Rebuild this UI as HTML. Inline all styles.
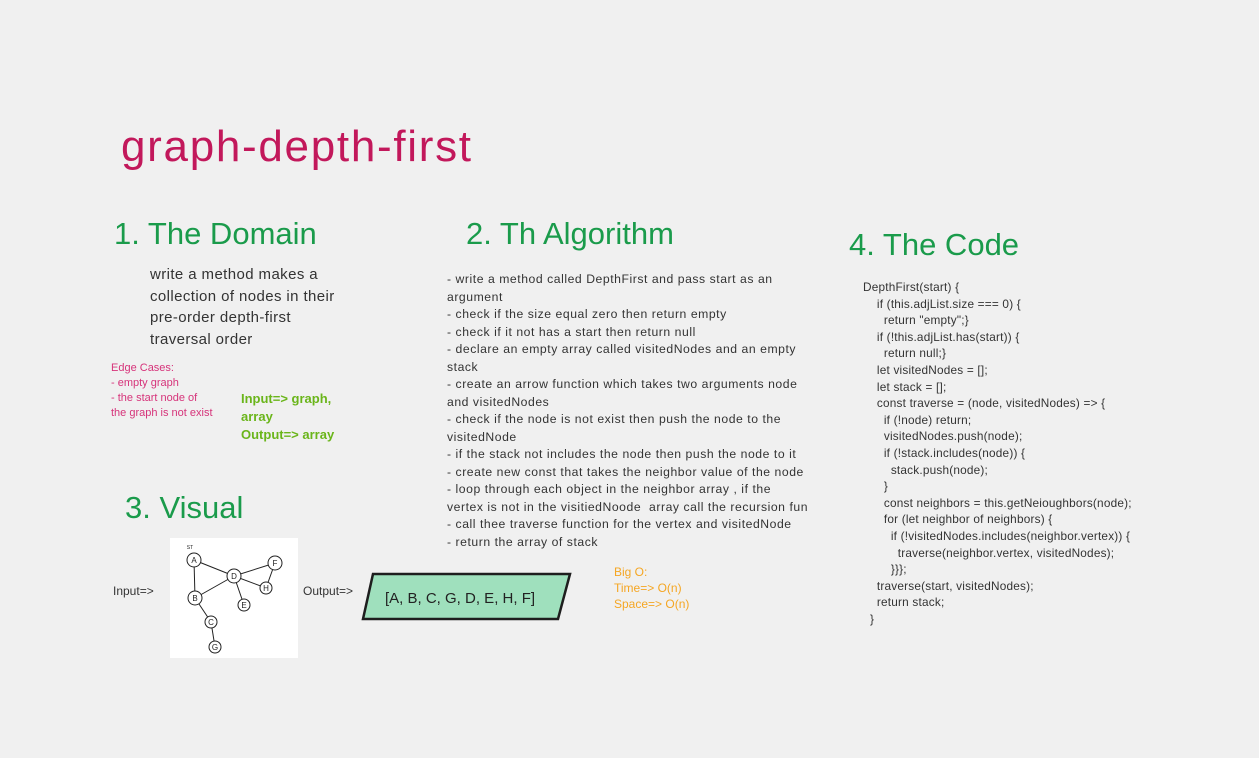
<!DOCTYPE html>
<html><head><meta charset="utf-8"><style>
body{margin:0;width:1259px;height:758px;background:#f0f0f0;position:relative;overflow:hidden;font-family:"Liberation Sans",sans-serif;color:#222}
.a{position:absolute;white-space:pre}
.h{color:#1a9b4b;font-size:31px}
</style></head><body>
<div class="a" style="left:121px;top:122px;font-size:44px;color:#c2185b;letter-spacing:1.7px">graph-depth-first</div>
<div class="a h" style="left:114px;top:216px">1. The Domain</div>
<div class="a h" style="left:466px;top:216px">2. Th Algorithm</div>
<div class="a h" style="left:849px;top:227px">4. The Code</div>
<div class="a h" style="left:125px;top:490px">3. Visual</div>
<div class="a" style="left:150px;top:264px;font-size:15px;line-height:21.5px;color:#333;letter-spacing:0.4px">write a method makes a
collection of nodes in their
pre-order depth-first
traversal order</div>
<div class="a" style="left:111px;top:361px;font-size:11px;line-height:15px;color:#d6337a">Edge Cases:
- empty graph
- the start node of
the graph is not exist</div>
<div class="a" style="left:241px;top:390px;font-size:13px;line-height:18px;color:#6ab51a;font-weight:bold">Input=> graph,
array
Output=> array</div>
<div class="a" style="left:447px;top:271px;font-size:12.2px;line-height:17.5px;color:#333;letter-spacing:0.55px">- write a method called DepthFirst and pass start as an
argument
- check if the size equal zero then return empty
- check if it not has a start then return null
- declare an empty array called visitedNodes and an empty
stack
- create an arrow function which takes two arguments node
and visitedNodes
- check if the node is not exist then push the node to the
visitedNode
- if the stack not includes the node then push the node to it
- create new const that takes the neighbor value of the node
- loop through each object in the neighbor array , if the
vertex is not in the visitiedNoode  array call the recursion fun
- call thee traverse function for the vertex and visitedNode
- return the array of stack</div>
<div class="a" style="left:863px;top:279px;font-size:11.8px;line-height:16.6px;color:#333;letter-spacing:0.2px">DepthFirst(start) {
    if (this.adjList.size === 0) {
      return "empty";}
    if (!this.adjList.has(start)) {
      return null;}
    let visitedNodes = [];
    let stack = [];
    const traverse = (node, visitedNodes) => {
      if (!node) return;
      visitedNodes.push(node);
      if (!stack.includes(node)) {
        stack.push(node);
      }
      const neighbors = this.getNeioughbors(node);
      for (let neighbor of neighbors) {
        if (!visitedNodes.includes(neighbor.vertex)) {
          traverse(neighbor.vertex, visitedNodes);
        }}};
    traverse(start, visitedNodes);
    return stack;
  }</div>
<div class="a" style="left:113px;top:584px;font-size:12px;color:#333">Input=></div>
<div class="a" style="left:303px;top:584px;font-size:12px;color:#333">Output=></div>
<div class="a" style="left:614px;top:564px;font-size:12px;line-height:16px;color:#f5a623">Big O:
Time=> O(n)
Space=> O(n)</div>
<svg class="a" style="left:170px;top:538px" width="128" height="120" viewBox="0 0 128 120">
<rect width="128" height="120" fill="#fff"/>
<g stroke="#222" stroke-width="1" fill="#fff">
<line x1="24" y1="22" x2="64" y2="38"/><line x1="24" y1="22" x2="25" y2="60"/>
<line x1="64" y1="38" x2="25" y2="60"/><line x1="64" y1="38" x2="105" y2="25"/>
<line x1="64" y1="38" x2="96" y2="50"/><line x1="105" y1="25" x2="96" y2="50"/>
<line x1="64" y1="38" x2="74" y2="67"/><line x1="25" y1="60" x2="41" y2="84"/>
<line x1="41" y1="84" x2="45" y2="109"/>
<circle cx="24" cy="22" r="7"/><circle cx="64" cy="38" r="7"/><circle cx="105" cy="25" r="7"/>
<circle cx="96" cy="50" r="6"/><circle cx="25" cy="60" r="7"/><circle cx="74" cy="67" r="6"/>
<circle cx="41" cy="84" r="6"/><circle cx="45" cy="109" r="6"/>
</g>
<g font-size="8" text-anchor="middle" fill="#222" font-family="Liberation Sans">
<text x="24" y="25">A</text><text x="64" y="41">D</text><text x="105" y="28">F</text><text x="96" y="53">H</text>
<text x="25" y="63">B</text><text x="74" y="70">E</text><text x="41" y="87">C</text><text x="45" y="112">G</text>
<text x="20" y="11" font-size="5">ST</text></g>
</svg>
<svg class="a" style="left:360px;top:572px" width="212" height="50"><polygon points="13,2 210,2 198,47 3,47" fill="#9fe0bd" stroke="#1e1e1e" stroke-width="2.5"/></svg>
<div class="a" style="left:385px;top:590px;font-size:15px;color:#222">[A, B, C, G, D, E, H, F]</div>
</body></html>
